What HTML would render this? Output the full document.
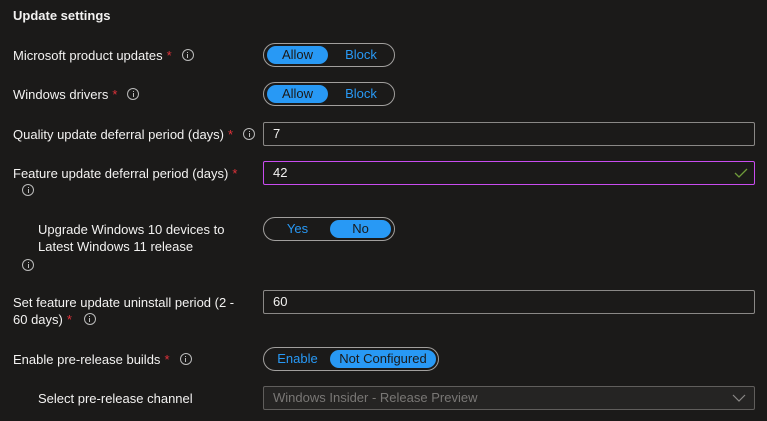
<!DOCTYPE html>
<html><head><style>
*{margin:0;padding:0;box-sizing:border-box}
body{width:767px;height:421px;background:#1b1a19;font-family:"Liberation Sans",sans-serif;color:#f3f2f1;font-size:13px;position:relative;overflow:hidden}
.a{position:absolute;white-space:nowrap;line-height:17px}
.r{color:#e0323a;margin-left:4px}
.i{display:inline-block;width:12px;height:12px;border:1px solid #bbb;border-radius:50%;position:relative;vertical-align:-1px;margin-left:10px}
.i:after{content:"";position:absolute;left:4.5px;top:4px;width:1px;height:4px;background:#bbb}
.i:before{content:"";position:absolute;left:4.5px;top:2px;width:1px;height:1px;background:#bbb}
.pill{position:absolute;border:1px solid #a19f9d;border-radius:12px;height:24px}
.seg{position:absolute;top:2px;height:18px;border-radius:9px;text-align:center;line-height:18px;color:#2899f5}
.on{background:#2899f5;color:#1b1a19}
.inp{position:absolute;left:263px;width:492px;height:24px;border:1px solid #8a8886;border-radius:2px;padding-left:9px;line-height:22px}
</style></head><body>
<div class="a" style="left:13px;top:7px;font-weight:bold">Update settings</div>

<div class="a" style="left:13px;top:47px">Microsoft product updates<span class="r">*</span><span class="i"></span></div>
<div class="pill" style="left:263px;top:43px;width:132px"><div class="seg on" style="left:3px;width:61px">Allow</div><div class="seg" style="left:66px;width:62px">Block</div></div>

<div class="a" style="left:13px;top:86px">Windows drivers<span class="r">*</span><span class="i"></span></div>
<div class="pill" style="left:263px;top:82px;width:132px"><div class="seg on" style="left:3px;width:61px">Allow</div><div class="seg" style="left:66px;width:62px">Block</div></div>

<div class="a" style="left:13px;top:126px">Quality update deferral period (days)<span class="r">*</span><span class="i"></span></div>
<div class="inp" style="top:122px">7</div>

<div class="a" style="left:13px;top:165px">Feature update deferral period (days)<span class="r">*</span></div>
<div class="a" style="left:12px;top:182px"><span class="i" style="margin-left:10px"></span></div>
<div class="inp" style="top:161px;border-color:#c94cf0">42
<svg style="position:absolute;right:6px;top:6px" width="14" height="10" viewBox="0 0 14 10"><path d="M1 5 L5 9 L13 1" fill="none" stroke="#6f9a3a" stroke-width="1.3"/></svg></div>

<div class="a" style="left:38px;top:221px">Upgrade Windows 10 devices to</div>
<div class="a" style="left:38px;top:238px">Latest Windows 11 release</div>
<div class="a" style="left:12px;top:257px"><span class="i" style="margin-left:10px"></span></div>
<div class="pill" style="left:263px;top:217px;width:132px"><div class="seg" style="left:3px;width:61px">Yes</div><div class="seg on" style="left:66px;width:61px">No</div></div>

<div class="a" style="left:13px;top:294px">Set feature update uninstall period (2 -</div>
<div class="a" style="left:13px;top:311px">60 days)<span class="r">*</span><span class="i" style="margin-left:12px"></span></div>
<div class="inp" style="top:290px">60</div>

<div class="a" style="left:13px;top:351px">Enable pre-release builds<span class="r">*</span><span class="i"></span></div>
<div class="pill" style="left:263px;top:347px;width:176px"><div class="seg" style="left:3px;width:61px">Enable</div><div class="seg on" style="left:66px;width:106px">Not Configured</div></div>

<div class="a" style="left:38px;top:390px">Select pre-release channel</div>
<div class="inp" style="top:386px;background:#252423;border-color:#605e5c;color:#797775">Windows Insider - Release Preview
<svg style="position:absolute;right:8px;top:7px" width="14" height="8" viewBox="0 0 14 8"><path d="M1 1 L7 7 L13 1" fill="none" stroke="#8a8886" stroke-width="1.2"/></svg></div>
</body></html>
